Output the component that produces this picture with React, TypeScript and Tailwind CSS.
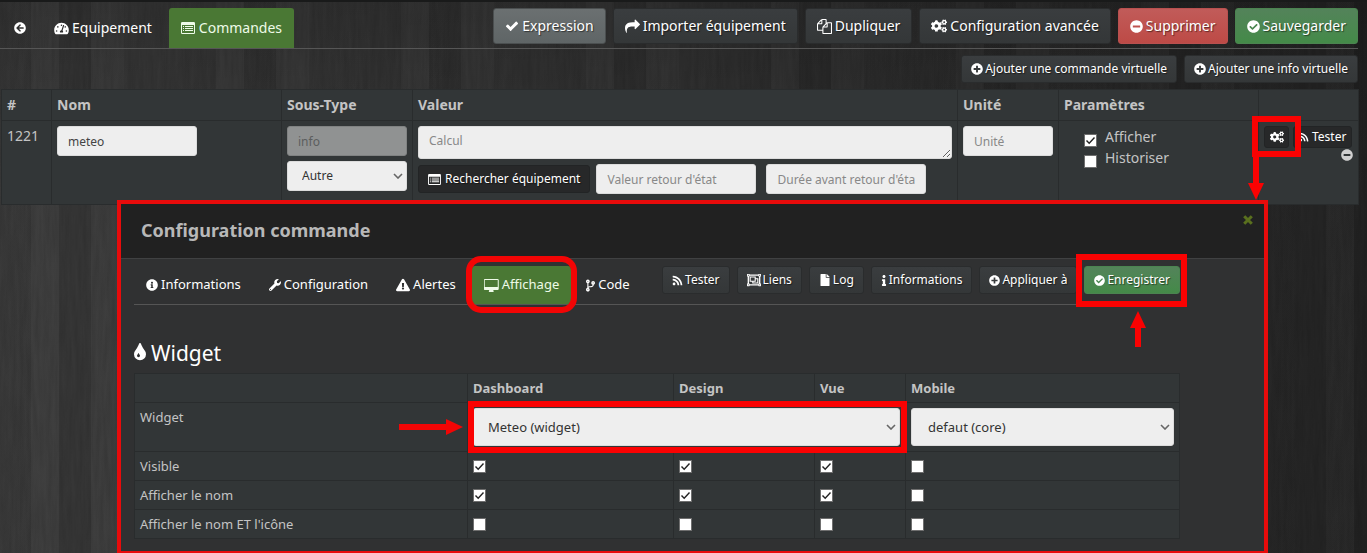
import React from "react";
import type { ReactNode } from "react";
import {
  FaArrowCircleLeft,
  FaTachometerAlt,
  FaCogs,
  FaMinusCircle,
  FaCheckCircle,
  FaPlusCircle,
  FaRss,
  FaInfoCircle,
  FaInfo,
  FaWrench,
  FaExclamationTriangle,
  FaCodeBranch,
  FaFile,
  FaRegObjectGroup,
} from "react-icons/fa";

function Glyph({ d, box = "0 0 1792 1792", className = "h-[1em] w-[1em]" }: { d: string; box?: string; className?: string }) {
  return (
    <svg viewBox={box} className={className} fill="currentColor" aria-hidden="true">
      <path d={d} />
    </svg>
  );
}

const CHECK =
  "M1671 566q0 40-28 68l-724 724-136 136q-28 28-68 28t-68-28l-136-136-362-362q-28-28-28-68t28-68l136-136q28-28 68-28t68 28l294 295 656-657q28-28 68-28t68 28l136 136q28 28 28 68z";
const SHARE =
  "M1792 640q0 26-19 45l-512 512q-19 19-45 19t-45-19-19-45v-256h-224q-98 0-175.500 6t-154 21.500-133 42.500-105.500 69.500-80 101-48.500 138.500-17.500 181q0 55 5 123 0 6 2.500 23.500t2.500 26.500q0 15-8.500 25t-23.500 10q-16 0-28-17-7-9-13-22t-13.500-30-10.500-24q-127-285-127-451 0-199 53-333 162-403 875-403h224v-256q0-26 19-45t45-19 45 19l512 512q19 19 19 45z";
const FILES =
  "M1696 384q40 0 68 28t28 68v1216q0 40-28 68t-68 28h-960q-40 0-68-28t-28-68v-288h-544q-40 0-68-28t-28-68v-672q0-40 20-88t48-76l408-408q28-28 76-48t88-20h416q40 0 68 28t28 68v328q68-40 128-40h416zm-544 213l-299 299h299v-299zm-640-384l-299 299h299v-299zm196 647l316-316v-416h-384v416q0 40-28 68t-68 28h-416v640h512v-256q0-40 20-88t48-76zm956 804v-1152h-384v416q0 40-28 68t-68 28h-416v640h896z";
const TINT =
  "M896 1152q0-36-20-69-1-1-15.500-22.500t-25.500-38-25-44-21-50.500q-4-16-21-16t-21 16q-7 23-21 50.500t-25 44-25.500 38-15.500 22.500q-20 33-20 69 0 53 37.500 90.500t90.500 37.500 90.500-37.500 37.500-90.500zm512-128q0 212-150 362t-362 150-362-150-150-362q0-145 81-275 6-9 62.500-90.500t101-151 99.500-178 83-201.500q9-30 34-47t51-17 51.500 17 33.500 47q28 93 83 201.500t99.500 178 101 151 62.500 90.500q81 127 81 275z";
const DESKTOP =
  "M1728 992v-832q0-13-9.500-22.500t-22.500-9.500h-1600q-13 0-22.500 9.500t-9.500 22.500v832q0 13 9.500 22.500t22.500 9.500h1600q13 0 22.500-9.500t9.500-22.500zm128-832v1088q0 66-47 113t-113 47h-544q0 37 16 77.500t32 71 16 43.500q0 26-19 45t-45 19h-512q-26 0-45-19t-19-45q0-14 16-44t32-70 16-78h-544q-66 0-113-47t-47-113v-1088q0-66 47-113t113-47h1600q66 0 113 47t47 113z";

function ListAlt({ className = "h-[12px] w-[14px]" }: { className?: string }) {
  return (
    <svg viewBox="0 0 14 12" className={className} fill="currentColor" aria-hidden="true">
      <path
        fillRule="evenodd"
        d="M1.200 0h11.600A1.200 1.200 0 0 1 14 1.200v9.600a1.200 1.200 0 0 1-1.200 1.200H1.200A1.200 1.200 0 0 1 0 10.800V1.200A1.200 1.200 0 0 1 1.200 0zM1 3v7.700q0 .3.300.3h11.400q.3 0 .3-.3V3z"
      />
      <path d="M2 4h1v1H2zM4 4h8v1H4zM2 6h1v1H2zM4 6h8v1H4zM2 8h1v1H2zM4 8h8v1H4z" />
    </svg>
  );
}

const buttonTone = {
  dark: "border-[#2a2c2d] bg-linear-to-b from-[#3a3d3f] to-[#343738]",
  black: "border-[#222425] bg-[#272829]",
  grey: "border-[#4b4f50] bg-linear-to-b from-[#6b7071] to-[#5f6566]",
  red: "border-[#b9504f] bg-linear-to-b from-[#c15b59] to-[#bd4a46]",
  green: "border-[#4b8450] bg-linear-to-b from-[#53835a] to-[#448a48]",
};

function Button({ tone = "dark", size = "sm", icon, children }: { tone?: keyof typeof buttonTone; size?: "sm" | "lg"; icon: ReactNode; children: ReactNode }) {
  const scale = size === "lg" ? "h-9 gap-[3px] px-[11px] text-[14px]" : "h-7 gap-[2px] px-[9px] text-[12px]";
  return (
    <button
      type="button"
      className={`flex shrink-0 items-center whitespace-nowrap rounded-[3px] border text-white [text-shadow:1px_1px_1px_rgba(0,0,0,0.5)] ${scale} ${buttonTone[tone]}`}
    >
      {icon}
      {children}
    </button>
  );
}

function Check({ id, label, checked = false }: { id?: string; label?: string; checked?: boolean }) {
  return (
    <span className="grid h-[13px] w-[13px] shrink-0">
      <input
        id={id}
        type="checkbox"
        aria-label={label}
        defaultChecked={checked}
        className="peer col-start-1 row-start-1 h-[13px] w-[13px] appearance-none border border-[#6f6f6f] bg-white"
      />
      <svg
        viewBox="0 0 13 13"
        className="pointer-events-none invisible col-start-1 row-start-1 h-[13px] w-[13px] peer-checked:visible"
        fill="none"
        stroke="#222"
        strokeWidth="1.400"
        aria-hidden="true"
      >
        <path d="M2.500 6.500l2.700 2.800L10.500 3.500" />
      </svg>
    </span>
  );
}

function Select({ label, value, className }: { label: string; value: string; className: string }) {
  return (
    <span className="grid w-full items-center">
      <select
        aria-label={label}
        className={`col-start-1 row-start-1 w-full appearance-none rounded-[3px] border border-[#dcdcdc] bg-[#eeeeee] text-[#333] ${className}`}
      >
        <option>{value}</option>
      </select>
      <svg viewBox="0 0 10 6" className="pointer-events-none col-start-1 row-start-1 mr-1 h-[6px] w-[10px] justify-self-end" fill="none" stroke="#666" strokeWidth="1.600" aria-hidden="true">
        <path d="M1 1l4 4 4-4" />
      </svg>
    </span>
  );
}

const field = "h-[30px] rounded-[3px] border border-[#dcdcdc] bg-[#eeeeee] px-[10px] text-[12px] text-[#444] placeholder:text-[#888]";
const mainCell = "border border-[#292c2d] px-[5px] text-left align-top";
const widgetCell = "border border-[#292c2d] px-[5px] text-left";

function Wood() {
  return (
    <>
      <div className="absolute inset-0 bg-linear-to-r from-[#3d3d3d] via-[#343434] to-[#262626]" />
      <div className="absolute inset-0 bg-[repeating-linear-gradient(90deg,rgba(0,0,0,0.06)_0px_31px,rgba(255,255,255,0.01)_31px_59px,rgba(0,0,0,0.1)_59px_91px,rgba(255,255,255,0.01)_91px_124px,rgba(0,0,0,0.04)_124px_185px)]" />
      <div className="absolute inset-x-0 top-0 h-[200px] bg-linear-to-b from-black/15 to-transparent" />
      <svg className="absolute inset-0 h-full w-full opacity-10" aria-hidden="true">
        <filter id="grain" colorInterpolationFilters="sRGB">
          <feTurbulence type="fractalNoise" baseFrequency="0.25 0.02" numOctaves="4" seed="8" />
          <feColorMatrix type="matrix" values="0 0 0 0 0  0 0 0 0 0  0 0 0 0 0  1.600 0 0 0 -0.4" />
        </filter>
        <rect width="100%" height="100%" filter="url(#grain)" />
      </svg>
    </>
  );
}

const widgetRows = [
  { name: "Visible", values: [true, true, true, false] },
  { name: "Afficher le nom", values: [true, true, true, false] },
  { name: "Afficher le nom ET l'icône", values: [false, false, false, false] },
];
const views = ["Dashboard", "Design", "Vue", "Mobile"];

function Dialog() {
  return (
    <section role="dialog" aria-label="Configuration commande" className="absolute top-[200px] right-[99px] left-[117px] border-4 border-[#e80b0b] bg-[#303132]">
      <header className="flex h-[55px] items-center justify-between border-b border-[#404142] bg-[#212121] pr-[11px] pb-[2px] pl-5">
        <h2 className="text-[18px] font-bold text-[#b8b8b8]">Configuration commande</h2>
        <button type="button" aria-label="Fermer" className="mb-5 text-[#5a701e]">
          <svg viewBox="0 0 10 10" className="h-[10px] w-[10px]" fill="none" stroke="currentColor" strokeWidth="3" aria-hidden="true">
            <path d="M1.200 1.200l7.600 7.600M8.800 1.200L1.200 8.800" />
          </svg>
        </button>
      </header>
      <div className="mr-[84px] ml-[13px] pt-[7px] pb-3">
        <div className="flex justify-between border-b border-[#555]">
          <nav className="flex h-[38px] items-stretch gap-1 text-[13px] text-white">
            <a href="#informations" className="flex items-center gap-[3px] px-3">
              <FaInfoCircle className="text-[12px]" />
              Informations
            </a>
            <a href="#configuration" className="flex items-center gap-[3px] px-3">
              <FaWrench className="text-[12px]" />
              Configuration
            </a>
            <a href="#alertes" className="flex items-center gap-[3px] px-3">
              <FaExclamationTriangle className="text-[14px]" />
              Alertes
            </a>
            <a href="#affichage" className="relative flex items-center gap-[3px] rounded-t-[3px] bg-[#4a7834] px-3 text-[#eefbe8]">
              <Glyph d={DESKTOP} box="0 0 1856 1664" className="h-[13px] w-[15px]" />
              Affichage
              <span className="pointer-events-none absolute -inset-x-[6px] -top-[10px] -bottom-[9px] rounded-[15px] border-[6px] border-[#f20505]" />
            </a>
            <a href="#code" className="flex items-center gap-[3px] px-[11px]">
              <FaCodeBranch className="h-[13px] w-[9px]" />
              Code
            </a>
          </nav>
          <div className="flex gap-[7px]">
            <Button icon={<FaRss className="text-[11px]" />}>Tester</Button>
            <Button icon={<FaRegObjectGroup className="text-[14px]" />}>Liens</Button>
            <Button icon={<FaFile className="h-[12px] w-[12px]" />}>Log</Button>
            <Button icon={<FaInfo className="h-[11px] w-[6px]" />}>Informations</Button>
            <Button icon={<FaPlusCircle className="text-[11px]" />}>Appliquer à</Button>
            <div className="relative">
              <Button tone="green" icon={<FaCheckCircle className="text-[11px]" />}>Enregistrer</Button>
              <span className="pointer-events-none absolute -top-3 -right-[7px] -bottom-[3px] -left-2 border-[6px] border-[#fa0202]" />
              <svg viewBox="0 0 16 36" className="absolute top-[45px] left-[46px] h-9 w-4 fill-[#fa0202]" aria-hidden="true">
                <path d="M8 0l8 17h-5v19H5V17H0z" />
              </svg>
            </div>
          </div>
        </div>
        <h3 className="flex h-[68px] items-end gap-[5px] pb-[6px] text-[21px] leading-7 text-white">
          <Glyph d={TINT} box="384 128 1024 1408" className="mb-[6px] h-[18px] w-[12px]" />
          Widget
        </h3>
        <table className="w-full table-fixed border-collapse bg-[#323637] text-[13px] leading-4 text-[#c4c4c4]">
          <colgroup>
            <col className="w-[333px]" />
            <col className="w-[206px]" />
            <col className="w-[141px]" />
            <col className="w-[91px]" />
            <col />
          </colgroup>
          <thead>
            <tr className="h-[29px]">
              <th className={widgetCell} />
              {views.map((view) => (
                <th key={view} scope="col" className={widgetCell}>
                  {view}
                </th>
              ))}
            </tr>
          </thead>
          <tbody>
            <tr className="h-[49px]">
              <th scope="row" className={`${widgetCell} pt-[6px] align-top font-normal`}>
                Widget
              </th>
              <td colSpan={3} className={`${widgetCell} relative`}>
                <Select label="Widget du dashboard" value="Meteo (widget)" className="h-[38px] px-[14px] text-[13px]" />
                <span className="pointer-events-none absolute -inset-y-[2px] -right-[2px] left-0 border-[6px] border-[#fa0202]" />
                <svg viewBox="0 0 64 16" className="absolute top-4 -left-[69px] h-4 w-16 fill-[#f20505]" aria-hidden="true">
                  <path d="M64 8L47 16v-5H0V5h47V0z" />
                </svg>
              </td>
              <td className={widgetCell}>
                <Select label="Widget mobile" value="defaut (core)" className="h-[38px] px-4 text-[13px]" />
              </td>
            </tr>
            {widgetRows.map((row) => (
              <tr key={row.name} className="h-[29px]">
                <th scope="row" className={`${widgetCell} font-normal`}>
                  {row.name}
                </th>
                {row.values.map((checked, i) => (
                  <td key={views[i]} className={widgetCell}>
                    <Check label={`${row.name} ${views[i]}`} checked={checked} />
                  </td>
                ))}
              </tr>
            ))}
          </tbody>
        </table>
      </div>
    </section>
  );
}

export default function App() {
  return (
    <div className="relative min-h-screen overflow-hidden bg-[#303030] font-['Noto_Sans',sans-serif]">
      <Wood />
      <main className="relative border-t-2 border-[#191a1a] pt-[6px] pr-[9px] text-[14px] leading-5 text-[#c4c4c4]">
        <div className="flex justify-between border-b border-[#565656]">
          <nav className="flex h-10 items-stretch gap-[2px] text-white">
            <a href="#retour" aria-label="Retour" className="flex items-center pr-[12px] pl-[14px]">
              <FaArrowCircleLeft className="text-[12px]" />
            </a>
            <a href="#equipement" className="flex items-center gap-[3px] pr-[15px] pl-[14px]">
              <FaTachometerAlt className="h-[13px] w-[15px]" />
              Equipement
            </a>
            <a href="#commandes" className="flex items-center gap-1 rounded-t-[3px] bg-[#4a7834] px-3 text-[#eefbe8]">
              <ListAlt />
              Commandes
            </a>
          </nav>
          <div className="flex gap-[7px]">
            <Button size="lg" tone="grey" icon={<Glyph d={CHECK} />}>Expression</Button>
            <Button size="lg" icon={<Glyph d={SHARE} className="h-[15px] w-[15px]" />}>Importer équipement</Button>
            <Button size="lg" icon={<Glyph d={FILES} className="h-[15px] w-[15px]" />}>Dupliquer</Button>
            <Button size="lg" icon={<FaCogs className="h-[14px] w-[16px]" />}>Configuration avancée</Button>
            <Button size="lg" tone="red" icon={<FaMinusCircle className="text-[13px]" />}>Supprimer</Button>
            <Button size="lg" tone="green" icon={<FaCheckCircle className="text-[13px]" />}>Sauvegarder</Button>
          </div>
        </div>
        <div className="flex justify-end gap-[7px] py-[6px]">
          <Button icon={<FaPlusCircle className="text-[12px]" />}>Ajouter une commande virtuelle</Button>
          <Button icon={<FaPlusCircle className="text-[12px]" />}>Ajouter une info virtuelle</Button>
        </div>
        <table className="ml-px w-full table-fixed border-collapse bg-[#323637]">
          <colgroup>
            <col className="w-[50px]" />
            <col className="w-[230px]" />
            <col className="w-[131px]" />
            <col />
            <col className="w-[101px]" />
            <col className="w-[200px]" />
            <col className="w-[100px]" />
          </colgroup>
          <thead>
            <tr className="h-[31px]">
              {["#", "Nom", "Sous-Type", "Valeur", "Unité", "Paramètres", ""].map((title, i) => (
                <th key={i} scope="col" className={`${mainCell} pt-[5px]`}>
                  {title}
                </th>
              ))}
            </tr>
          </thead>
          <tbody>
            <tr className="h-[84px]">
              <td className={`${mainCell} pt-[5px]`}>1221</td>
              <td className={`${mainCell} pt-[5px]`}>
                <input aria-label="Nom" defaultValue="meteo" className={`${field} block w-[140px]`} />
              </td>
              <td className={`${mainCell} pt-[5px]`}>
                <input
                  aria-label="Type"
                  disabled
                  defaultValue="info"
                  className="mb-[5px] block h-[30px] w-full rounded-[3px] border border-[#808282] bg-[#909292] px-[10px] text-[12px] text-[#5c5e5e]"
                />
                <Select label="Sous-type" value="Autre" className="h-[30px] px-[14px] text-[12px]" />
              </td>
              <td className={`${mainCell} pt-[5px]`}>
                <textarea
                  aria-label="Calcul"
                  placeholder="Calcul"
                  className="block h-[33px] w-full resize overflow-hidden rounded-[3px] border border-[#dcdcdc] bg-[#eeeeee] px-[10px] pt-[5px] text-[12px] leading-[18px] placeholder:text-[#888]"
                />
                <div className="mt-[5px] flex items-center">
                  <Button tone="black" icon={<ListAlt className="mr-[2px] h-[11px] w-[13px]" />}>Rechercher équipement</Button>
                  <input aria-label="Valeur retour d'état" placeholder="Valeur retour d'état" className={`${field} ml-[6px] w-[160px]`} />
                  <input aria-label="Durée avant retour d'état" placeholder="Durée avant retour d'état" className={`${field} ml-[10px] w-[160px]`} />
                </div>
              </td>
              <td className={`${mainCell} pt-[5px]`}>
                <input aria-label="Unité" placeholder="Unité" className={`${field} block w-full`} />
              </td>
              <td className={`${mainCell} pt-[6px]`}>
                <div className="flex flex-col gap-px pl-5">
                  <div className="flex items-end gap-2">
                    <Check id="afficher" checked />
                    <label htmlFor="afficher">Afficher</label>
                  </div>
                  <div className="flex items-end gap-2">
                    <Check id="historiser" />
                    <label htmlFor="historiser">Historiser</label>
                  </div>
                </div>
              </td>
              <td className={`${mainCell} pt-[5px]`}>
                <div className="flex gap-1">
                  <div className="relative">
                    <button type="button" aria-label="Configurer" className="flex h-[22px] w-[25px] items-center justify-center rounded-[3px] border border-[#222425] bg-[#272829] text-white">
                      <FaCogs className="h-[12px] w-[14px]" />
                    </button>
                    <span className="pointer-events-none absolute -inset-x-3 -top-[10px] -bottom-[9px] z-10 border-[6px] border-[#fa0202]" />
                    <svg viewBox="0 0 16 43" className="absolute top-[31px] -left-4 z-10 h-[43px] w-4 fill-[#fa0202]" aria-hidden="true">
                      <path d="M5 0h6v26h5L8 43 0 26h5z" />
                    </svg>
                  </div>
                  <button type="button" className="flex h-[22px] items-center gap-[3px] rounded-[3px] border border-[#222425] bg-[#272829] px-[5px] text-[12px] text-white">
                    <FaRss className="text-[10px]" />
                    Tester
                  </button>
                </div>
                <button type="button" aria-label="Supprimer la commande" className="mt-px ml-auto block text-[12px] text-[#d0d0d0]">
                  <FaMinusCircle />
                </button>
              </td>
            </tr>
          </tbody>
        </table>
      </main>
      <Dialog />
    </div>
  );
}
